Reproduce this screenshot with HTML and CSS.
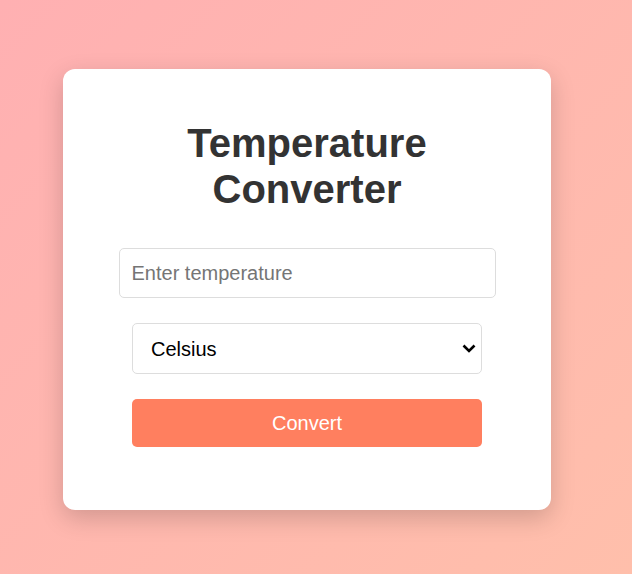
FILE: index.html
```html
<!DOCTYPE html>
<html lang="en">
<head>
<meta charset="utf-8">
<title>Temperature Converter</title>
<link rel="stylesheet" href="styles.css">
</head>
<body>
<div class="card">
  <h1 class="title">Temperature Converter</h1>
  <input class="field" type="text" placeholder="Enter temperature">
  <select class="unit">
    <option>Celsius</option>
    <option>Fahrenheit</option>
    <option>Kelvin</option>
  </select>
  <button class="convert" type="button">Convert</button>
</div>
</body>
</html>
```

FILE: styles.css
```css
html, body {
  margin: 0;
  height: 100%;
}
body {
  font-family: "Liberation Sans", Arial, sans-serif;
  background: linear-gradient(135deg, #ffb0b2 0%, #ffbfab 100%);
  display: flex;
  justify-content: center;
  align-items: center;
  padding: 5px 18px 0 0;
  box-sizing: border-box;
}
.card {
  width: 488px;
  box-sizing: border-box;
  background: #fff;
  border-radius: 12px;
  box-shadow: 0 8px 24px rgba(0, 0, 0, 0.18);
  padding: 51px 0 63px;
  display: flex;
  flex-direction: column;
  align-items: center;
}
.title {
  width: 350px;
  margin: 0 0 36px;
  font-size: 40px;
  line-height: 46px;
  font-weight: bold;
  color: #333;
  text-align: center;
}
.field {
  width: 377px;
  height: 50px;
  box-sizing: border-box;
  border: 1px solid #ddd;
  border-radius: 5px;
  padding: 0 12px;
  font-family: inherit;
  font-size: 20px;
  color: #333;
  outline: none;
  margin: 0 0 25px;
}
.field::placeholder {
  color: #757575;
}
.unit {
  -webkit-appearance: none;
  appearance: none;
  width: 350px;
  height: 51px;
  box-sizing: border-box;
  border: 1px solid #ddd;
  border-radius: 5px;
  padding: 0 24px 0 18px;
  font-family: inherit;
  font-size: 20px;
  color: #000;
  background: #fff url("data:image/svg+xml,%3Csvg xmlns='http://www.w3.org/2000/svg' width='14' height='9' viewBox='0 0 14 9'%3E%3Cpath d='M1.5 1.5 L7 7 L12.5 1.5' fill='none' stroke='%23000' stroke-width='2.6'/%3E%3C/svg%3E") no-repeat right 5px center / 14px 9px;
  margin: 0 0 25px;
}
.convert {
  width: 350px;
  height: 48px;
  border: none;
  border-radius: 5px;
  background: #ff7f5f;
  color: #fff;
  font-family: inherit;
  font-size: 20px;
  cursor: pointer;
}
```
